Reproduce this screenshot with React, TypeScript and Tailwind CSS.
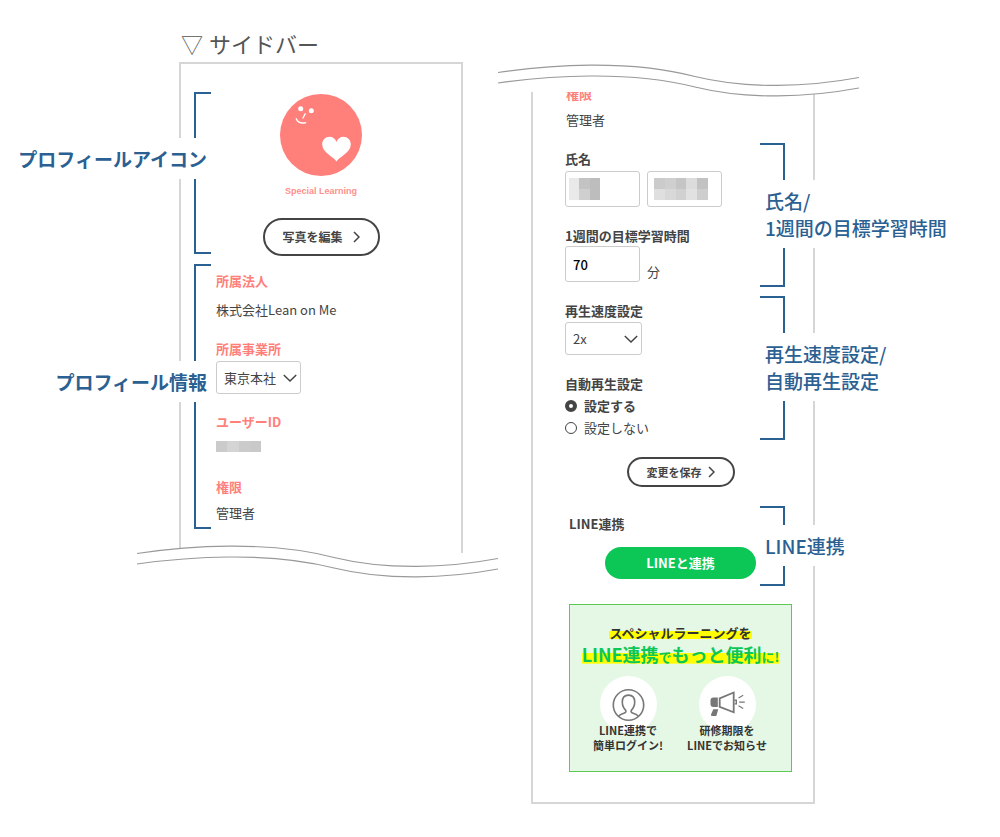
import React, { useState } from 'react';

type Side = 'left' | 'right';

const nameMosaics = {
  last: [
    ['#e9e9e9', '#c3c3c3', '#bdbdbd'],
    ['#e9e9e9', '#cfcfcf', '#bdbdbd'],
  ],
  first: [
    ['#cbcbcb', '#cfcfcf', '#c5c5c5', '#dcdcdc', '#c2c2c2'],
    ['#dfdfdf', '#d8d8d8', '#d1d1d1', '#e1e1e1', '#cecece'],
  ],
};

const userIdMosaic = [['#cbcbcb', '#d4d4d4', '#cbcbcb', '#c9c9c9']];

const Mosaic: React.FC<{ rows: string[][]; className: string }> = ({ rows, className }) => (
  <svg
    className={className}
    viewBox={`0 0 ${rows[0].length} ${rows.length}`}
    preserveAspectRatio="none"
    shapeRendering="crispEdges"
    aria-hidden="true"
  >
    {rows.map((row, y) =>
      row.map((fill, x) => <rect key={`${x}-${y}`} x={x} y={y} width="1" height="1" fill={fill} />)
    )}
  </svg>
);

// Double wavy line that shows where the sidebar is cut
const Wave: React.FC<{ className: string; mask: string }> = ({ className, mask }) => (
  <svg className={className} viewBox="0 0 361 34" fill="none" aria-hidden="true">
    <path d={mask} fill="#fff" />
    <path d="M0 8.500C50 1 130 -5 197 12.500C250 25.500 310 23 361 13.500" stroke="#999" strokeWidth="1.200" />
    <path d="M0 19C50 12 130 6 197 23C250 36 310 33.500 361 24" stroke="#999" strokeWidth="1.200" />
  </svg>
);

const Callout: React.FC<{ side: Side; className?: string; children: React.ReactNode }> = ({
  side,
  className = '',
  children,
}) => (
  <div
    className={`absolute flex items-center border-y-2 border-[#2b6092] ${
      side === 'left'
        ? 'left-[13px] w-[17px] border-l-2 justify-end pb-[30px]'
        : 'right-[28px] w-[25px] border-r-2 justify-start pb-0.5 pl-1'
    } ${className}`}
  >
    <p
      className={`shrink-0 bg-white py-[7px] whitespace-nowrap text-[19px] leading-[27px] text-[#2b6092] ${
        side === 'left' ? 'pr-1 font-bold' : 'px-px font-medium'
      }`}
    >
      {children}
    </p>
  </div>
);

const ChevronRight: React.FC = () => (
  <svg width="7" height="12" viewBox="0 0 7 12" fill="none" stroke="#444" strokeWidth="1.500" aria-hidden="true">
    <path d="M1 1l5 5-5 5" />
  </svg>
);

const ChevronDown: React.FC = () => (
  <svg
    className="pointer-events-none absolute top-[13px] right-1"
    width="14"
    height="9"
    viewBox="0 0 14 9"
    fill="none"
    stroke="#444"
    strokeWidth="1.500"
    aria-hidden="true"
  >
    <path d="M.8 1l6.200 6 6.200-6" />
  </svg>
);

const Logo: React.FC = () => (
  <svg className="mx-auto" width="82" height="82" viewBox="0 0 82 82" fill="none" aria-hidden="true">
    <circle cx="41" cy="41" r="41" fill="#ff7f7b" />
    <circle cx="20.700" cy="14.700" r="2.500" fill="#fff" />
    <circle cx="31.300" cy="16.700" r="2.500" fill="#fff" />
    <path d="M25.200 19.700l-2.200 4.300M16.300 24.800c1.200 3.500 5 4.700 9.300 3.900" stroke="#fff" strokeWidth="1.400" strokeLinecap="round" />
    <path
      d="M56.500 67.500C53 62.500 42.200 58.500 42.200 50.300c0-4.400 3.300-7.600 7.300-7.600 3.300 0 5.900 2 7 5.200 1.100-3.200 3.700-5.200 7-5.200 4 0 7.300 3.200 7.300 7.600 0 8.200-10.800 12.200-14.300 17.200z"
      fill="#fff"
    />
  </svg>
);

const UserIcon: React.FC = () => (
  <svg className="mx-auto" width="57" height="57" viewBox="0 0 57 57" fill="none" stroke="#777" strokeWidth="1.600" aria-hidden="true">
    <circle cx="28.500" cy="28.500" r="28.500" fill="#fff" stroke="none" />
    <circle cx="28.500" cy="29" r="15.200" />
    <path d="M18.500 40.200c1.500-1.700 3.500-2.300 5.800-3.100 1.500-.6 2-1.600 1.400-2.700-2-2-3.400-5-3.400-8.300 0-4.400 2.500-7 6.200-7s6.200 2.600 6.200 7c0 3.300-1.400 6.300-3.400 8.300-.6 1.100-.1 2.100 1.400 2.700 2.300.8 4.300 1.400 5.800 3.100" />
  </svg>
);

const MegaphoneIcon: React.FC = () => (
  <svg className="mx-auto" width="57" height="57" viewBox="0 0 57 57" fill="none" stroke="#777" aria-hidden="true">
    <circle cx="28.500" cy="28.500" r="28.500" fill="#fff" stroke="none" />
    <path d="M14.500 21.500h4.300v9.500h-4.300a3 3 0 0 1-3-3v-3.500a3 3 0 0 1 3-3zM14.300 33.300h5l-2 6.700h-4.300c-.9 0-1.300-.6-1-1.400z" fill="#777" stroke="none" />
    <path d="M20.700 22.300l14-5.800v19.800l-14-5.500z" strokeWidth="1.800" />
    <path d="M35.500 24.300h1.800v3.600h-1.800" strokeWidth="1.400" />
    <path d="M39.500 22l4.700-2.700M40.200 26.200h5.600M39.500 29.800l4.700 2.700" strokeWidth="1.200" />
  </svg>
);

const Term: React.FC<{ className?: string; children: React.ReactNode }> = ({ className = '', children }) => (
  <dt className={`font-bold text-[#ff7f7b] ${className}`}>{children}</dt>
);

const App: React.FC = () => {
  const [office, setOffice] = useState('東京本社');
  const [minutes, setMinutes] = useState('70');
  const [speed, setSpeed] = useState('2x');
  const [autoPlay, setAutoPlay] = useState(true);

  const fieldStyle = 'rounded-[3px] border border-[#ccc] bg-white px-[7px]';
  const radioStyle =
    'size-3 appearance-none rounded-full border border-[#444] bg-white checked:border-4';

  return (
    <main
      lang="ja"
      className="flex min-h-screen items-start justify-center gap-[68px] bg-white pr-1.5 font-['Noto_Sans_CJK_JP',sans-serif] text-[13px] leading-5 text-[#444]"
    >
      <section className="w-[284px] shrink-0 pt-[27px]">
        <h1 className="flex gap-1.5 pb-[3px] pl-0.5 text-[22px] leading-8 font-normal whitespace-nowrap text-[#555]">
          <span className="font-light">▽</span>
          サイドバー
        </h1>

        <div className="border-x-2 border-t-2 border-[#d6d6d6] pt-7 pb-6">
          <div className="relative pt-0.5 text-center">
            <Callout side="left" className="top-0 bottom-0.5">
              プロフィールアイコン
            </Callout>
            <Logo />
            <p className="mt-2 font-['Liberation_Sans',sans-serif] text-[9px] leading-[14px] font-bold text-[#ff8f8b]">
              Special Learning
            </p>
            <button
              type="button"
              className="mx-auto mt-5 flex h-[38px] w-[117px] items-center justify-center gap-2.5 rounded-full border-2 border-[#444] bg-white text-[12px] font-bold"
            >
              写真を編集
              <ChevronRight />
            </button>
          </div>

          <div className="relative mt-2 pt-[7px] pb-1.5 pl-[35px]">
            <Callout side="left" className="inset-y-0">
              プロフィール情報
            </Callout>
            <dl>
              <Term>所属法人</Term>
              <dd className="mt-[9px]">株式会社Lean on Me</dd>
              <Term className="mt-[19px]">
                <label htmlFor="office">所属事業所</label>
              </Term>
              <dd className="relative mt-0.5 w-[85px]">
                <select
                  id="office"
                  value={office}
                  onChange={e => setOffice(e.target.value)}
                  className={`block h-[33px] w-full appearance-none ${fieldStyle}`}
                >
                  <option>東京本社</option>
                </select>
                <ChevronDown />
              </dd>
              <Term className="mt-[18px]">ユーザーID</Term>
              <dd className="mt-[9px]">
                <Mosaic rows={userIdMosaic} className="h-[11px] w-[45px]" />
              </dd>
              <Term className="mt-[25px]">権限</Term>
              <dd className="mt-1.5">管理者</dd>
            </dl>
          </div>
        </div>
        <Wave
          className="relative -mt-2 -ml-[42px] w-[361px] max-w-none"
          mask="M0 8C50 1 130 -5 197 12C250 25 310 23 361 13V34H0z"
        />
      </section>

      <section className="w-[284px] shrink-0 pt-16">
        <Wave
          className="relative z-10 -ml-[33px] w-[361px] max-w-none"
          mask="M0 19C50 12 130 6 197 23C250 36 310 33.500 361 24V0H0z"
        />

        <div className="-mt-1.5 border-x-2 border-b-2 border-[#d6d6d6] pb-[30px]">
          <dl className="pl-[33px]">
            <div className="h-3 overflow-hidden">
              <Term className="-mt-2">権限</Term>
            </div>
            <dd className="mt-1.5">管理者</dd>
          </dl>

          <div className="relative mt-[13px] pt-1.5 pb-[5px] pl-8">
            <Callout side="right" className="inset-y-0">
              氏名/
              <br />
              1週間の目標学習時間
            </Callout>
            <label htmlFor="last-name" className="font-bold">
              氏名
            </label>
            <div className="mt-0.5 flex gap-[7px]">
              <div className="relative">
                <input id="last-name" type="text" className={`block h-9 w-[75px] ${fieldStyle}`} />
                <Mosaic rows={nameMosaics.last} className="absolute top-[7px] left-1 h-[22px] w-[31px]" />
              </div>
              <div className="relative">
                <input type="text" aria-label="名" className={`block h-9 w-[75px] ${fieldStyle}`} />
                <Mosaic rows={nameMosaics.first} className="absolute top-[7px] left-[7px] h-[22px] w-[54px]" />
              </div>
            </div>
            <label htmlFor="minutes" className="mt-[19px] block font-bold">
              1週間の目標学習時間
            </label>
            <div className="flex items-end gap-[7px]">
              <input
                id="minutes"
                type="text"
                inputMode="numeric"
                value={minutes}
                onChange={e => setMinutes(e.target.value)}
                className={`block h-9 w-[75px] font-medium text-black ${fieldStyle}`}
              />
              <span>分</span>
            </div>
          </div>

          <div className="relative mt-[9px] pt-[5px] pb-0.5 pl-8">
            <Callout side="right" className="inset-y-0">
              再生速度設定/
              <br />
              自動再生設定
            </Callout>
            <label htmlFor="speed" className="block font-bold">
              再生速度設定
            </label>
            <div className="relative mt-px w-[77px]">
              <select
                id="speed"
                value={speed}
                onChange={e => setSpeed(e.target.value)}
                className={`block h-[33px] w-full appearance-none ${fieldStyle}`}
              >
                <option>1x</option>
                <option>1.5x</option>
                <option>2x</option>
              </select>
              <ChevronDown />
            </div>
            <fieldset className="mt-[19px]">
              <legend className="font-bold">自動再生設定</legend>
              <label className="mt-0.5 flex w-fit items-center gap-[7px] font-bold">
                <input
                  type="radio"
                  name="auto-play"
                  checked={autoPlay}
                  onChange={() => setAutoPlay(true)}
                  className={radioStyle}
                />
                設定する
              </label>
              <label className="mt-0.5 flex w-fit items-center gap-[7px]">
                <input
                  type="radio"
                  name="auto-play"
                  checked={!autoPlay}
                  onChange={() => setAutoPlay(false)}
                  className={radioStyle}
                />
                設定しない
              </label>
            </fieldset>
          </div>

          <div className="mt-[17px] pr-[18px] pl-[33px]">
            <button
              type="button"
              className="mx-auto flex h-[30px] w-[108px] items-center justify-center gap-1.5 rounded-full border-2 border-[#444] bg-white text-[11px] font-bold"
            >
              変更を保存
              <ChevronRight />
            </button>
          </div>

          <div className="relative mt-[19px] pt-2 pr-[18px] pb-[7px] pl-[33px]">
            <Callout side="right" className="inset-y-0">
              LINE連携
            </Callout>
            <h2 className="pl-[3px] font-bold">LINE連携</h2>
            <button
              type="button"
              className="mx-auto mt-[13px] block h-8 w-[151px] rounded-full bg-[#0cc755] font-bold text-white"
            >
              LINEと連携
            </button>
          </div>

          <div className="mt-[18px] mr-[21px] ml-9 border border-[#5ccb55] bg-[#e5f8e5] pt-[18px] pb-[18px] text-center font-bold whitespace-nowrap text-[#333]">
            <p>
              <span className="bg-linear-to-b from-transparent from-50% to-[#ffff00] to-50% bg-[length:100%_86%] bg-no-repeat">
                スペシャルラーニングを
              </span>
            </p>
            <p className="flex justify-center leading-[22px] text-[#0cc755]">
              <span className="flex h-[22px] items-baseline bg-linear-to-b from-transparent from-50% to-[#ffff00] to-50% bg-[length:100%_94%] bg-no-repeat text-[18px]">
                LINE連携<span className="text-[13px]">で</span>もっと便利
                <span className="text-[13px]">に!</span>
              </span>
            </p>
            <ul className="mt-[11px] flex justify-center gap-[18px] pr-1.5 text-[11px] leading-[15px]">
              <li className="w-[81px]">
                <UserIcon />
                <p className="relative -mt-2.5">
                  LINE連携で
                  <br />
                  簡単ログイン!
                </p>
              </li>
              <li className="w-[81px]">
                <MegaphoneIcon />
                <p className="relative -mt-2.5">
                  研修期限を
                  <br />
                  LINEでお知らせ
                </p>
              </li>
            </ul>
          </div>
        </div>
      </section>
    </main>
  );
};

export default App;
